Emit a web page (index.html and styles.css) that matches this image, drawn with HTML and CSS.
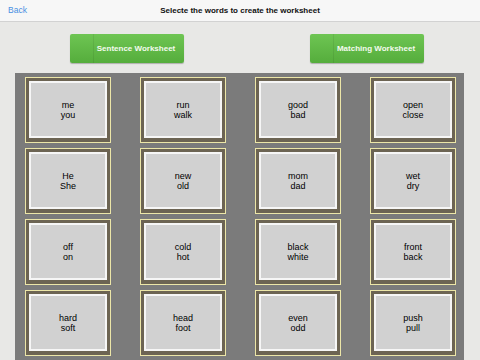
FILE: index.html
```html
<!DOCTYPE html>
<html>
<head>
<meta charset="utf-8">
<link rel="stylesheet" href="styles.css">
</head>
<body>
<header class="navbar">
  <a class="back">Back</a>
  <div class="title">Selecte the words to create the worksheet</div>
</header>
<div class="actions">
  <button class="green-btn"><span class="cap"></span><span class="label">Sentence Worksheet</span></button>
  <button class="green-btn"><span class="cap"></span><span class="label">Matching Worksheet</span></button>
</div>
<main class="board">
  <div class="card"><div class="face">me<br>you</div></div>
  <div class="card"><div class="face">run<br>walk</div></div>
  <div class="card"><div class="face">good<br>bad</div></div>
  <div class="card"><div class="face">open<br>close</div></div>
  <div class="card"><div class="face">He<br>She</div></div>
  <div class="card"><div class="face">new<br>old</div></div>
  <div class="card"><div class="face">mom<br>dad</div></div>
  <div class="card"><div class="face">wet<br>dry</div></div>
  <div class="card"><div class="face">off<br>on</div></div>
  <div class="card"><div class="face">cold<br>hot</div></div>
  <div class="card"><div class="face">black<br>white</div></div>
  <div class="card"><div class="face">front<br>back</div></div>
  <div class="card"><div class="face">hard<br>soft</div></div>
  <div class="card"><div class="face">head<br>foot</div></div>
  <div class="card"><div class="face">even<br>odd</div></div>
  <div class="card"><div class="face">push<br>pull</div></div>
</main>
</body>
</html>
```
FILE: styles.css
```css
html, body {
  margin: 0;
  padding: 0;
  background: #e8e8e6;
  font-family: "Liberation Sans", Arial, sans-serif;
  height: 360px;
  overflow: hidden;
}
.navbar {
  height: 21px;
  background: #f7f7f7;
  border-bottom: 1px solid #d2d2d2;
  position: relative;
  display: flex;
  align-items: center;
  justify-content: center;
}
.back {
  position: absolute;
  left: 8px;
  top: 5px;
  font-size: 8.5px;
  color: #4a90e2;
}
.title {
  font-size: 8px;
  font-weight: bold;
  color: #111;
}
.actions {
  display: flex;
  padding: 12px 0 0 70px;
  gap: 126px;
  height: 29px;
}
.green-btn {
  width: 114px;
  height: 29px;
  border: none;
  border-radius: 2px;
  background: linear-gradient(#6ec553, #55ad3c);
  box-shadow: 0 1px 1px rgba(0,0,0,0.25);
  display: flex;
  padding: 0;
  font-family: "Liberation Sans", Arial, sans-serif;
}
.cap {
  width: 23px;
  height: 100%;
  border-right: 1px solid rgba(0,0,0,0.07);
}
.label {
  flex: 1;
  display: flex;
  align-items: center;
  justify-content: center;
  color: #f4fbef;
  font-size: 8px;
  font-weight: bold;
  padding-right: 6px;
}
.board {
  margin: 10px 16px 0 15px;
  background: #7b7b7b;
  padding: 4px 8px 0 10px;
  display: grid;
  grid-template-columns: repeat(4, 86px);
  grid-auto-rows: 66px;
  align-content: start;
  column-gap: 29px;
  row-gap: 5px;
  height: 300px;
}
.card {
  height: 66px;
  box-sizing: border-box;
  border: 1px solid #ece6a8;
  background: #6c6453;
  padding: 3px 3px 4px 3px;
  display: flex;
}
.face {
  flex: 1;
  border: 2px solid #f6f6f6;
  background: #d1d1d1;
  display: flex;
  align-items: center;
  justify-content: center;
  text-align: center;
  font-size: 9px;
  line-height: 10px;
  color: #000;
}
```
